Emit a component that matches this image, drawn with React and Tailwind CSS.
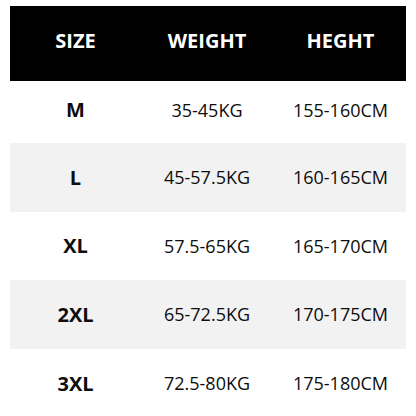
const rows = [
  { size: 'M', weight: '35-45KG', height: '155-160CM', h: 'h-[62px] pb-[4px]' },
  { size: 'L', weight: '45-57.5KG', height: '160-165CM', h: 'h-[69px]' },
  { size: 'XL', weight: '57.5-65KG', height: '165-170CM', h: 'h-[68px]' },
  { size: '2XL', weight: '65-72.5KG', height: '170-175CM', h: 'h-[69px]' },
  { size: '3XL', weight: '72.5-80KG', height: '175-180CM', h: 'h-[69px]' },
];

export default function App() {
  return (
    <div className="w-[416px] h-[416px] overflow-hidden bg-white pt-[6px] px-[10px] text-[#0d0d0d] font-['Open_Sans',sans-serif]">
      <div className="grid grid-cols-[131px_132px_135px] h-[75px] items-center bg-black text-white text-[20px] font-bold pb-[5px]">
        <div className="text-center">SIZE</div>
        <div className="text-center">WEIGHT</div>
        <div className="text-center">HEGHT</div>
      </div>
      {rows.map((row, i) => (
        <div
          key={row.size}
          className={`grid grid-cols-[131px_132px_135px] items-center text-[18px] ${row.h} ${i % 2 === 1 ? 'bg-[#f2f2f2]' : 'bg-white'}`}
        >
          <div className="text-center text-[20px] font-bold">{row.size}</div>
          <div className="text-center">{row.weight}</div>
          <div className="text-center">{row.height}</div>
        </div>
      ))}
    </div>
  );
}
